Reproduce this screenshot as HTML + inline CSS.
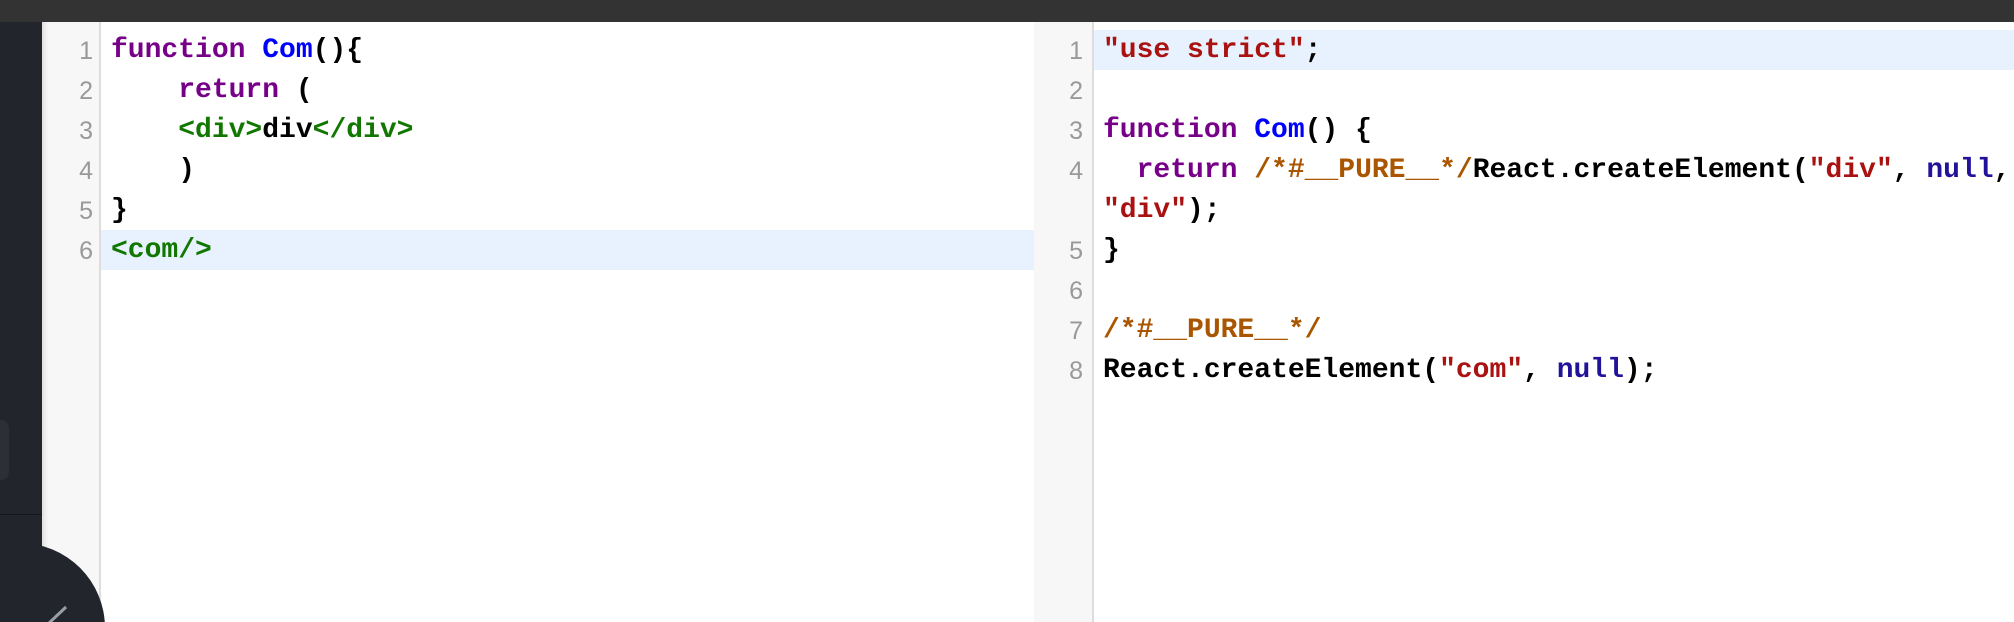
<!DOCTYPE html>
<html><head><meta charset="utf-8"><style>
html,body{margin:0;padding:0;width:2014px;height:622px;overflow:hidden;background:#fff;}
#w{position:relative;width:2014px;height:622px;overflow:hidden;font-family:"Liberation Mono",monospace;}
.top{position:absolute;left:0;top:0;width:2014px;height:22px;background:#333;}
.side{position:absolute;left:0;top:22px;width:42px;height:600px;background:#22252b;}
.pill{position:absolute;left:0;top:398px;width:9px;height:60px;background:#2c2f35;border-radius:0 8px 8px 0;}
.hline{position:absolute;left:0;top:492px;width:42px;height:1px;background:#15171b;}
.gut{position:absolute;top:22px;height:600px;background:#f7f7f7;border-right:2px solid #ddd;}
.g1{left:42px;width:57px;box-shadow:inset 6px 0 6px -4px rgba(0,0,0,0.12);}
.g2{left:1034px;width:58px;}
.hl{position:absolute;height:40px;background:#e8f2fe;}
.ln{position:absolute;line-height:40px;color:#999;text-align:right;width:40px;font-family:"Liberation Sans",sans-serif;font-size:25px;}
.code{position:absolute;font-size:28px;line-height:40px;white-space:pre;color:#000;font-weight:bold;}
.k{color:#770088}.d{color:#0000ff}.t{color:#117700}.s{color:#aa1111}.c{color:#aa5500}.a{color:#221199}
.circle{position:absolute;left:-65px;top:543px;width:170px;height:170px;border-radius:50%;background:#22252b;}
</style></head><body><div id="w">
<div class="top"></div>
<div class="side"><div class="pill"></div><div class="hline"></div></div>
<div class="gut g1"></div>
<div class="gut g2"></div>
<div class="hl" style="left:101px;top:230px;width:933px"></div>
<div class="hl" style="left:1094px;top:30px;width:920px"></div>
<div class="ln" style="left:53px;top:31px">1<br>2<br>3<br>4<br>5<br>6</div>
<div class="code" style="left:111px;top:31px"><span class="k">function</span> <span class="d">Com</span>(){
    <span class="k">return</span> (
    <span class="t">&lt;div&gt;</span>div<span class="t">&lt;/div&gt;</span>
    )
}
<span class="t">&lt;com/&gt;</span></div>
<div class="ln" style="left:1043px;top:31px">1<br>2<br>3<br>4<br>&nbsp;<br>5<br>6<br>7<br>8</div>
<div class="code" style="left:1103px;top:31px"><span class="s">"use strict"</span>;

<span class="k">function</span> <span class="d">Com</span>() {
  <span class="k">return</span> <span class="c">/*#__PURE__*/</span>React.createElement(<span class="s">"div"</span>, <span class="a">null</span>,
<span class="s">"div"</span>);
}

<span class="c">/*#__PURE__*/</span>
React.createElement(<span class="s">"com"</span>, <span class="a">null</span>);</div>
<div class="circle"></div>
<svg style="position:absolute;left:0;top:590px" width="120" height="32"><line x1="66" y1="17" x2="48" y2="34" stroke="#9a9ea6" stroke-width="3"/></svg>
</div></body></html>
